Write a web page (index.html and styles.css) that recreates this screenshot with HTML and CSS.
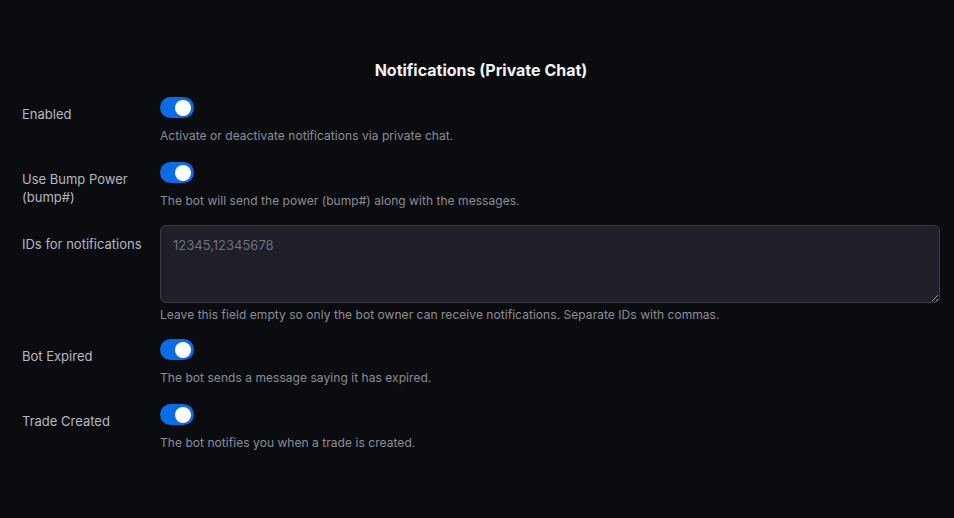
FILE: index.html
```html
<!DOCTYPE html>
<html lang="en">
<head>
  <meta charset="UTF-8" />
  <meta name="viewport" content="width=device-width, initial-scale=1.0"/>
  <title>Notifications | Settings</title>
  <link rel="stylesheet" href="styles.css">
</head>
<body>

  <section class="settings">
    <h2 class="settings-title">Notifications (Private Chat)</h2>

    <div class="field">
      <label class="field-label" for="enabled">Enabled</label>
      <div class="field-control">
        <label class="switch">
          <input type="checkbox" id="enabled" checked />
          <span class="slider"></span>
        </label>
        <div class="hint">Activate or deactivate notifications via private chat.</div>
      </div>
    </div>

    <div class="field">
      <label class="field-label" for="bump">Use Bump Power<br>(bump#)</label>
      <div class="field-control">
        <label class="switch">
          <input type="checkbox" id="bump" checked />
          <span class="slider"></span>
        </label>
        <div class="hint">The bot will send the power (bump#) along with the messages.</div>
      </div>
    </div>

    <div class="field field-tight">
      <label class="field-label" for="ids">IDs for notifications</label>
      <div class="field-control">
        <textarea id="ids" class="input-area" placeholder="12345,12345678"></textarea>
        <div class="hint hint-tight">Leave this field empty so only the bot owner can receive notifications. Separate IDs with commas.</div>
      </div>
    </div>

    <div class="field">
      <label class="field-label" for="expired">Bot Expired</label>
      <div class="field-control">
        <label class="switch">
          <input type="checkbox" id="expired" checked />
          <span class="slider"></span>
        </label>
        <div class="hint">The bot sends a message saying it has expired.</div>
      </div>
    </div>

    <div class="field">
      <label class="field-label" for="trade">Trade Created</label>
      <div class="field-control">
        <label class="switch">
          <input type="checkbox" id="trade" checked />
          <span class="slider"></span>
        </label>
        <div class="hint">The bot notifies you when a trade is created.</div>
      </div>
    </div>
  </section>

</body>
</html>
```

FILE: styles.css
```css
body {
  font-family: 'Inter', 'Noto Sans', sans-serif;
  background-color: #0b0c10;
  color: #b6b8c0;
  margin: 0;
}

.settings {
  padding: 60px 14px 0 22px;
}

.settings-title {
  text-align: center;
  color: #f2f2f4;
  font-size: 16px;
  font-weight: 700;
  line-height: 20px;
  margin: 0 0 15px;
}

.field {
  display: grid;
  grid-template-columns: 138px 1fr;
  margin-bottom: 15px;
}

.field-tight {
  margin-bottom: 13px;
}

.field-label {
  font-size: 13px;
  line-height: 18px;
  padding-top: 10px;
  color: #b6b8c0;
}

.field-control {
  display: flex;
  flex-direction: column;
  align-items: flex-start;
}

.switch {
  position: relative;
  display: block;
  width: 34px;
  height: 21px;
  margin-top: 2px;
  margin-bottom: 7px;
  cursor: pointer;
}

.switch input {
  display: none;
}

.slider {
  position: absolute;
  inset: 0;
  background: #0b6ce6;
  border-radius: 11px;
}

.slider::after {
  content: "";
  position: absolute;
  top: 2.5px;
  right: 3px;
  width: 16px;
  height: 16px;
  border-radius: 50%;
  background: #ffffff;
}

.hint {
  font-size: 12px;
  line-height: 18px;
  letter-spacing: 0.05px;
  color: #8c8e97;
  margin-top: 2px;
}

.hint-tight {
  margin-top: 3px;
}

.input-area {
  display: block;
  box-sizing: border-box;
  width: 100%;
  height: 78px;
  padding: 10px 12px;
  background: #1e1f29;
  border: 1px solid #3b3c47;
  border-radius: 6px;
  color: #d0d1d6;
  font-family: inherit;
  font-size: 13px;
  line-height: 18px;
  resize: vertical;
  color-scheme: dark;
}

.input-area::placeholder {
  color: #6e7079;
}
```
